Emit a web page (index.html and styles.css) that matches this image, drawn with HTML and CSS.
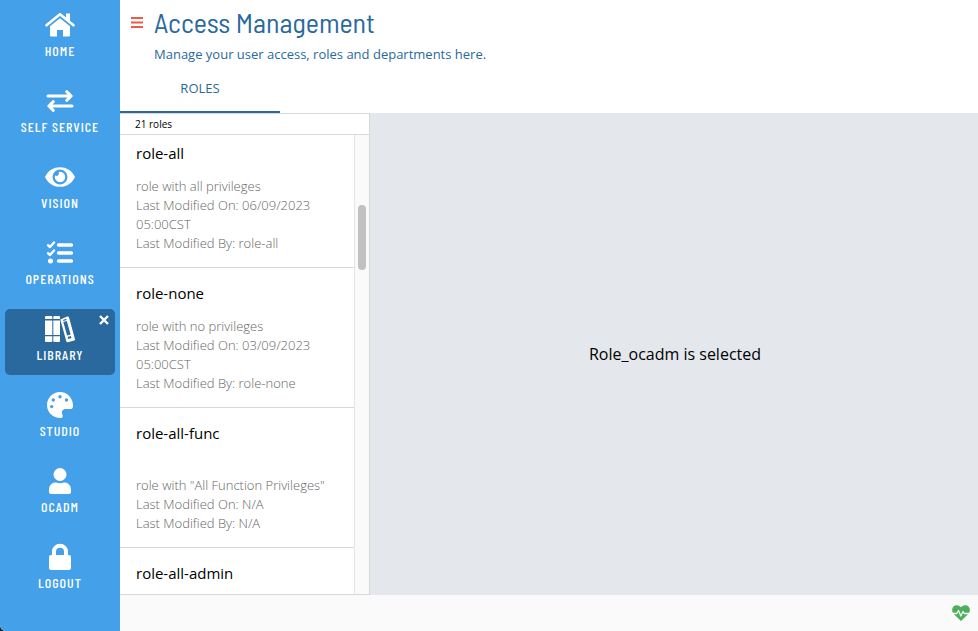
FILE: index.html
```html
<!DOCTYPE html>
<html lang="en">
<head>
<meta charset="utf-8">
<meta name="viewport" content="width=device-width, initial-scale=1">
<title>Access Management</title>
<link rel="stylesheet" href="styles.css">
</head>
<body>
<div class="app">
  <nav class="sidebar">
    <a class="nav-item" href="#home">
      <svg class="nav-icon" viewBox="0 0 30 30"><path fill="none" stroke="#fff" stroke-width="2.600" stroke-linecap="round" stroke-linejoin="round" d="M1.500 15.300 15 4.300l13.500 11"/><path d="M21 3.500h4v9l-4-3.500z"/><path d="M5 16.200 15 8.200l10 8V25.500q0 1-1 1h-6v-6.500h-6v6.500H6q-1 0-1-1z"/></svg>
      <span>HOME</span>
    </a>
    <a class="nav-item" href="#self-service">
      <svg class="nav-icon" viewBox="0 0 30 30"><path fill="none" stroke="#fff" stroke-width="3" stroke-linecap="round" stroke-linejoin="round" d="M3 10h23M21.700 5.700 26.200 10l-4.500 4.300M27 20H4M8.300 15.700 3.800 20l4.500 4.300"/></svg>
      <span>SELF SERVICE</span>
    </a>
    <a class="nav-item" href="#vision">
      <svg class="nav-icon" viewBox="0 0 30 30"><path fill-rule="evenodd" d="M0 15C3 8.500 8.500 5.200 15 5.200S27 8.500 30 15c-3 6.500-8.500 9.800-15 9.800S3 21.500 0 15zM15 7.500a7.500 7.500 0 1 0 0 15 7.500 7.500 0 0 0 0-15z"/><path d="M15 9.800a5.200 5.200 0 1 1-5 3.800 2.700 2.700 0 0 0 3.700-3.600q.6-.2 1.300-.2z"/></svg>
      <span>VISION</span>
    </a>
    <a class="nav-item" href="#operations">
      <svg class="nav-icon" viewBox="0 0 30 30"><g fill="none" stroke="#fff" stroke-linecap="round" stroke-linejoin="round"><path stroke-width="3.400" d="M13.500 7H26.500M13.500 15H26.500M13.500 23H26.500"/><path stroke-width="2.400" d="m3 7.200 2 1.800 4-4.500M3 15.200 5 17l4-4.500"/></g><circle cx="5.500" cy="23" r="2.500"/></svg>
      <span>OPERATIONS</span>
    </a>
    <div class="nav-item active">
      <a class="nav-link" href="#library" aria-current="page">
        <svg class="nav-icon" viewBox="0 0 30 30"><path d="M0 3q0-1 1-1h5.500q.8 0 .8 1v2H0zM0 6.500h7.300V21H0zM0 22.300h7.300V27q0 1-.8 1H1q-1 0-1-1zM8.300 3q0-1 1-1H14q1 0 1 1v2H8.300zM8.300 6.500H15V21H8.300zM8.300 22.300H15V27q0 1-1 1H9.300q-1 0-1-1z"/><path fill-rule="evenodd" d="m15.300 5.500 6.900-3q1.300-.4 1.700.6L30 25.200q.2 1-.7 1.300l-6.500 1.700q-1.200.2-1.500-.9zM18.300 8l3.800 13.500 3.500-1L21.800 7zM18 5.900l.4 1 3.200-.9-.3-1.200zM22.600 22.900l.6 2 3.200-.9-.5-1.900z"/></svg>
        <span>LIBRARY</span>
      </a>
      <button class="close" type="button" aria-label="Close Library"><svg viewBox="0 0 10 10"><path fill="none" stroke="#fff" stroke-width="2.400" d="m1 1 8 8M9 1 1 9"/></svg></button>
    </div>
    <a class="nav-item" href="#studio">
      <svg class="nav-icon" viewBox="0 0 30 30"><path fill-rule="evenodd" d="M15 2C8 2 2 7.800 2 15s5.600 13 13.500 13c2 0 2.700-1.500 2-3-1-2.200-.8-6 3-6H26c1.500 0 2-1.500 2-3.500C28 8 22.200 2 15 2zM6.700 14.900a1.700 1.700 0 1 0 0 3.400 1.700 1.700 0 0 0 0-3.400zM8.300 8.300a1.700 1.700 0 1 0 0 3.400 1.700 1.700 0 0 0 0-3.400zM15 5a1.700 1.700 0 1 0 0 3.400A1.700 1.700 0 0 0 15 5zM21.500 8.300a1.700 1.700 0 1 0 0 3.400 1.700 1.700 0 0 0 0-3.400z"/></svg>
      <span>STUDIO</span>
    </a>
    <a class="nav-item" href="#ocadm">
      <svg class="nav-icon" viewBox="0 0 30 30"><circle cx="15" cy="8.500" r="6.500"/><path d="M4 26v-2c0-5 3-7.500 7-7.500q4 1.500 8 0c4 0 7 2.500 7 7.500v2q0 2-2 2H6q-2 0-2-2z"/></svg>
      <span>OCADM</span>
    </a>
    <a class="nav-item" href="#logout">
      <svg class="nav-icon" viewBox="0 0 30 30"><path fill="none" stroke="#fff" stroke-width="4" d="M9 15V9.700a6 6 0 0 1 12 0V15"/><rect x="4" y="13" width="22" height="15" rx="2"/></svg>
      <span>LOGOUT</span>
    </a>
  </nav>
  <div class="page">
    <header class="header">
      <button class="menu" type="button" aria-label="Menu"><svg viewBox="0 0 12 12"><path fill="none" stroke="#f05a48" stroke-width="2" d="M0 2h12M0 6.500h12M0 11h12"/></svg></button>
      <div>
        <h1>Access Management</h1>
        <p>Manage your user access, roles and departments here.</p>
      </div>
    </header>
    <div class="tabs"><button class="tab" type="button">ROLES</button></div>
    <main class="content">
      <section class="roles">
        <div class="count">21 roles</div>
        <div class="scroller">
          <ul class="list">
            <li class="card"><h2>role-all</h2><p>role with all privileges<br>Last Modified On: 06/09/2023 05:00CST<br>Last Modified By: role-all</p></li>
            <li class="card"><h2>role-none</h2><p>role with no privileges<br>Last Modified On: 03/09/2023 05:00CST<br>Last Modified By: role-none</p></li>
            <li class="card"><h2>role-all-func</h2><p>role with "All Function Privileges"<br>Last Modified On: N/A<br>Last Modified By: N/A</p></li>
            <li class="card"><h2>role-all-admin</h2></li>
          </ul>
          <div class="track"><div class="thumb"></div></div>
        </div>
      </section>
      <section class="detail">Role_ocadm is selected</section>
    </main>
    <footer class="footer">
      <svg class="health" viewBox="0 0 18 16"><path fill="#4caf59" d="M9 16 1.500 8.700C-.8 6 0 1.700 3 .5 5.300-.3 7.300.4 9 2.300 10.700.4 12.700-.3 15 .5c3 1.200 3.800 5.500 1.500 8.200z"/><path fill="none" stroke="#fafafa" stroke-width="1.300" stroke-linejoin="round" d="M0 8.500h4.800l1.700-3 2.300 5.500 2.200-4.500 1.200 2H18"/></svg>
    </footer>
  </div>
</div>
</body>
</html>
```
FILE: styles.css
```css
* {
  box-sizing: border-box;
}

body,
h1,
h2,
p,
ul {
  margin: 0;
  padding: 0;
}

body {
  background: #1c2227;
  color: #000;
  font-family: "Open Sans", "Noto Sans", sans-serif;
}

button {
  padding: 0;
  border: 0;
  background: none;
  font: inherit;
  cursor: pointer;
}

svg {
  display: block;
}

.app {
  display: flex;
  height: 100vh;
  overflow: hidden;
  border-bottom-left-radius: 6px;
  background: #fff;
}

.sidebar {
  display: flex;
  flex: 0 0 120px;
  flex-direction: column;
  gap: 10px;
  padding: 5px;
  background: #43a0e9;
}

.nav-item {
  position: relative;
  height: 66px;
  padding-top: 5px;
  border-radius: 5px;
  color: #fff;
  font: 500 14px/20px "Barlow Condensed", "Roboto Condensed", "Liberation Sans Narrow", sans-serif;
  letter-spacing: 1px;
  text-align: center;
  text-decoration: none;
}

.nav-link {
  color: inherit;
  text-decoration: none;
}

.nav-item.active {
  background: #2a699e;
}

.nav-icon {
  width: 30px;
  height: 30px;
  margin: 0 auto 1px;
  fill: #fff;
}

.close {
  position: absolute;
  top: 6px;
  right: 6px;
}

.close svg {
  width: 10px;
  height: 10px;
}

.page {
  display: flex;
  flex: 1;
  flex-direction: column;
  min-width: 0;
}

.header {
  display: flex;
  gap: 11px;
  padding: 4px 11px 0;
  color: #2a699e;
}

.menu {
  height: 12px;
  margin-top: 12px;
}

.menu svg {
  width: 12px;
  height: 12px;
}

h1 {
  font: 400 28px/36px "Barlow Semi Condensed", "Barlow Condensed", "Roboto Condensed", sans-serif;
}

.header p {
  margin-top: 4px;
  font-size: 13px;
  line-height: 20px;
}

.tabs {
  display: flex;
}

.tab {
  width: 160px;
  height: 49px;
  border-bottom: 2px solid #2a699e;
  color: #2a699e;
  font-size: 13px;
}

.content {
  display: flex;
  flex: 1;
  min-height: 0;
}

.roles {
  display: flex;
  flex: 0 0 250px;
  flex-direction: column;
  border: 1px solid #d8d8d8;
  border-left: 0;
}

.count {
  padding-left: 15px;
  border-bottom: 1px solid #d8d8d8;
  font-size: 10px;
  line-height: 20px;
}

.scroller {
  display: flex;
  flex: 1;
  min-height: 0;
  overflow: hidden;
}

.list {
  flex: 1;
  margin-top: -7px;
  list-style: none;
}

.card {
  display: flex;
  flex-direction: column;
  justify-content: space-between;
  height: 140px;
  padding: 15px 16px 14px;
  border-bottom: 1px solid #d8d8d8;
}

.card h2 {
  font-size: 15px;
  font-weight: 400;
  line-height: 20px;
}

.card p {
  color: #666;
  font-size: 13px;
  font-weight: 300;
  line-height: 19px;
}

.track {
  width: 15px;
  padding: 70px 3px 0;
  border-left: 1px solid #e4e4e4;
  background: #fafafa;
}

.thumb {
  width: 8px;
  height: 65px;
  border-radius: 4px;
  background: #c1c1c1;
}

.detail {
  display: flex;
  flex: 1;
  align-items: center;
  justify-content: center;
  padding-left: 2px;
  background: #e4e8ec;
  font-size: 16px;
}

.footer {
  display: flex;
  align-items: center;
  justify-content: flex-end;
  height: 36px;
  padding-right: 8px;
  background: #fafafa;
}

.health {
  width: 18px;
  height: 16px;
}
```
